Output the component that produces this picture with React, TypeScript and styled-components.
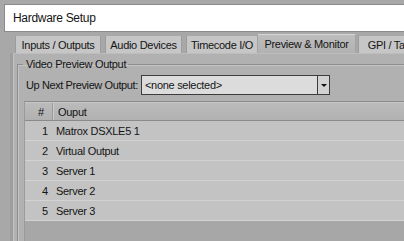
import styled, { createGlobalStyle } from 'styled-components'

import type { FC } from 'react'

const GlobalStyle = createGlobalStyle`
  html, body {
    margin: 0;
    padding: 0;
    background: #a8a8a8;
    font-family: "Liberation Sans", Arial, sans-serif;
    font-size: 11px;
    color: #141414;
  }
`

const Window = styled.div`
  width: 404px;
  height: 241px;
  overflow: hidden;
  box-sizing: border-box;
  padding-top: 4px;
  background: #a8a8a8;
`

const TitleBox = styled.div`
  margin-left: 4px;
  height: 28px;
  box-sizing: border-box;
  display: flex;
  align-items: center;
  padding-left: 8px;
  background: #ffffff;
  border: 1px solid #8a8a8a;
  border-right: none;
  font-size: 12px;
  letter-spacing: -0.3px;
`

const TabStrip = styled.div`
  display: flex;
  align-items: flex-end;
  gap: 4px;
  height: 20px;
  margin-left: 15px;
  margin-top: 1px;
`

const Tab = styled.div<{ $width: number; $active?: boolean }>`
  flex: none;
  width: ${p => p.$width}px;
  height: ${p => (p.$active ? 19 : 18)}px;
  margin: ${p => (p.$active ? '0 -2px 0 -5px' : '0')};
  box-sizing: border-box;
  display: flex;
  align-items: center;
  justify-content: center;
  white-space: nowrap;
  overflow: hidden;
  background: ${p => (p.$active ? 'linear-gradient(#bdbdbd, #b2b2b2)' : '#c6c6c6')};
  border: 1px solid ${p => (p.$active ? '#a4a4a4' : '#9c9c9c')};
  border-top-color: ${p => (p.$active ? '#d6d6d6' : '#a8a8a8')};
  border-bottom: none;
  border-radius: 2px 2px 0 0;
  letter-spacing: -0.3px;
  position: relative;
  z-index: ${p => (p.$active ? 1 : 0)};
`

const Panel = styled.div`
  margin-left: 13px;
  height: 189px;
  box-sizing: border-box;
  background: #b1b1b1;
  border-top: 1px solid #bdbdbd;
  border-left: 1px solid #c2c2c2;
  box-shadow: -3px 0 0 #9e9e9e;
  padding: 4px 0 0 3px;
`

const GroupBox = styled.fieldset`
  margin: 0;
  height: 100%;
  box-sizing: border-box;
  padding: 3px 0 0 7px;
  border: 1px solid #8e8e8e;
  border-right: none;
  border-bottom: none;
  box-shadow: inset 1px 1px 0 #c4c4c4;
  display: flex;
  flex-direction: column;
`

const Legend = styled.legend`
  margin-left: -2px;
  padding: 0 2px 0 3px;
  letter-spacing: -0.3px;
`

const FieldRow = styled.div`
  display: flex;
  align-items: center;
  gap: 6px;
  margin-top: 2px;
  padding-left: 1px;
  height: 20px;
`

const FieldLabel = styled.span`
  letter-spacing: -0.4px;
  white-space: nowrap;
  width: 109px;
`

const Select = styled.div`
  width: 189px;
  height: 20px;
  box-sizing: border-box;
  display: flex;
  background: #dcdcdc;
  border: 1px solid #3c3c3c;
`

const SelectValue = styled.span`
  flex: 1;
  display: flex;
  align-items: center;
  padding-left: 3px;
  letter-spacing: -0.3px;
`

const SelectButton = styled.span`
  width: 11px;
  display: flex;
  align-items: center;
  justify-content: center;
  border-left: 1px solid #3c3c3c;
  background: #d2d2d2;

  &::after {
    content: '';
    border-left: 3px solid transparent;
    border-right: 3px solid transparent;
    border-top: 3px solid #111;
  }
`

const Table = styled.div`
  margin-top: 6px;
  margin-left: -1px;
  flex: 1;
  background: #a7a7a7;
  border-top: 1px solid #8c8c8c;
  border-left: 1px solid #9a9a9a;
`

const Row = styled.div<{ $header?: boolean }>`
  display: grid;
  grid-template-columns: 28px 1fr;
  height: ${p => (p.$header ? 19 : 20)}px;
  box-sizing: border-box;
  background: ${p => (p.$header ? 'linear-gradient(#bbbbbb, #b1b1b1)' : '#c3c3c3')};
  border-bottom: 1px solid ${p => (p.$header ? '#8a8a8a' : '#d3d3d3')};
  border-top: ${p => (p.$header ? '1px solid #c6c6c6' : 'none')};
`

const NumCell = styled.span<{ $header?: boolean }>`
  display: flex;
  align-items: center;
  justify-content: flex-end;
  padding-right: ${p => (p.$header ? 8 : 5)}px;
  border-right: ${p => (p.$header ? '1px solid #9a9a9a' : 'none')};
  box-shadow: ${p => (p.$header ? '1px 0 0 #cacaca' : 'none')};
`

const NameCell = styled.span<{ $header?: boolean }>`
  display: flex;
  align-items: center;
  padding-left: ${p => (p.$header ? 5 : 3)}px;
  letter-spacing: -0.3px;
  white-space: nowrap;
`

const tabs = [
  { label: 'Inputs / Outputs', width: 86 },
  { label: 'Audio Devices', width: 77 },
  { label: 'Timecode I/O', width: 72 },
  { label: 'Preview & Monitor', width: 99, active: true },
  { label: 'GPI / Tally', width: 66 },
]

const outputs = ['Matrox DSXLE5 1', 'Virtual Output', 'Server 1', 'Server 2', 'Server 3']

const App: FC = () => {
  return (
    <Window>
      <GlobalStyle />
      <TitleBox>Hardware Setup</TitleBox>
      <TabStrip>
        {tabs.map(t => (
          <Tab key={t.label} $width={t.width} $active={t.active}>{t.label}</Tab>
        ))}
      </TabStrip>
      <Panel>
        <GroupBox>
          <Legend>Video Preview Output</Legend>
          <FieldRow>
            <FieldLabel>Up Next Preview Output:</FieldLabel>
            <Select>
              <SelectValue>&lt;none selected&gt;</SelectValue>
              <SelectButton />
            </Select>
          </FieldRow>
          <Table>
            <Row $header>
              <NumCell $header>#</NumCell>
              <NameCell $header>Ouput</NameCell>
            </Row>
            {outputs.map((name, i) => (
              <Row key={name}>
                <NumCell>{i + 1}</NumCell>
                <NameCell>{name}</NameCell>
              </Row>
            ))}
          </Table>
        </GroupBox>
      </Panel>
    </Window>
  )
}

export default App
